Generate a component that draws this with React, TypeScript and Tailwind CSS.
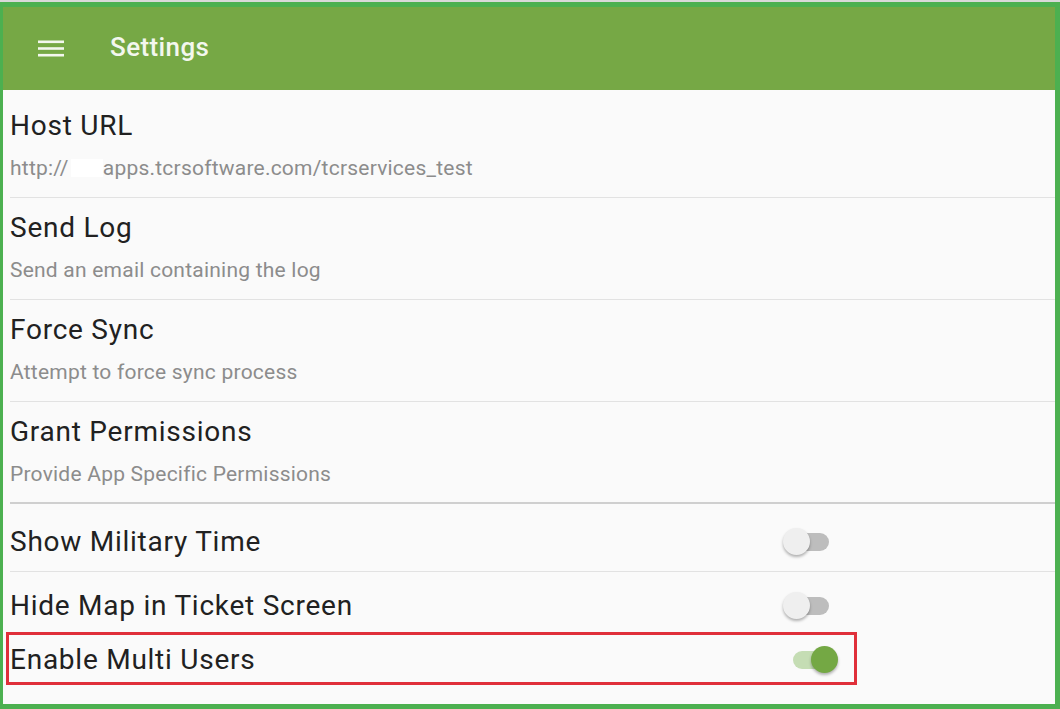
import React from 'react';

const font = { fontFamily: 'Roboto, "Noto Sans", sans-serif' };

type Pref = { title: string; summary: string };

const prefs: Pref[] = [
  { title: 'Host URL', summary: 'http://' },
  { title: 'Send Log', summary: 'Send an email containing the log' },
  { title: 'Force Sync', summary: 'Attempt to force sync process' },
  { title: 'Grant Permissions', summary: 'Provide App Specific Permissions' },
];

const Toggle: React.FC<{ on?: boolean }> = ({ on }) => {
  if (on) {
    return (
      <div className="relative w-[45px] h-[28px] flex items-center">
        <div className="w-[38px] h-[18px] rounded-full bg-[#c5ddb4]" />
        <div className="absolute right-0 top-0 w-[27px] h-[27px] rounded-full bg-[#74a844] shadow-[0_2px_3px_rgba(0,0,0,0.3)]" />
      </div>
    );
  }
  return (
    <div className="relative w-[46px] h-[28px] flex items-center justify-end">
      <div className="w-[38px] h-[18px] rounded-full bg-[#bdbdbd]" />
      <div className="absolute left-0 top-0 w-[27px] h-[27px] rounded-full bg-[#efefef] shadow-[0_2px_3px_rgba(0,0,0,0.3)]" />
    </div>
  );
};

const App: React.FC = () => {
  return (
    <div style={font} className="w-[1060px] h-[709px] bg-[#4cb050] border-t-2 border-[#d9d9d9] pt-[5px] pl-[3px] pr-[5px] pb-[5px] flex flex-col overflow-hidden">
      {/* Toolbar */}
      <header className="h-[83px] bg-[#76a845] flex items-center shrink-0">
        <div className="w-[107px] pl-[35px] flex">
          <svg width="26" height="18" viewBox="0 0 26 18">
            <rect x="0" y="0.5" width="26" height="2.6" fill="#f3f7ee" />
            <rect x="0" y="7.2" width="26" height="2.6" fill="#f3f7ee" />
            <rect x="0" y="13.9" width="26" height="2.6" fill="#f3f7ee" />
          </svg>
        </div>
        <h1 className="text-[26px] font-medium text-[#f3f7ee] tracking-[0.4px] -mt-[2px]">Settings</h1>
      </header>

      {/* Preferences */}
      <main className="flex-1 bg-[#fafafa] flex flex-col">
        {prefs.map((p, i) => (
          <div
            key={p.title}
            className={`flex flex-col pl-[7px] ${i === 0 ? 'pt-[20px] h-[108px]' : 'pt-[14px] h-[102px]'}`}
          >
            <div className="text-[28px] leading-[32px] tracking-[0.75px] text-[#212121]">{p.title}</div>
            <div className="mt-[14px] text-[21px] leading-[24px] tracking-[0.22px] text-[#8c8c8c] flex items-center">
              {p.summary}
              {i === 0 && (
                <>
                  <span className="inline-block w-[32px] h-[18px] bg-white ml-[2px]" />
                  <span>apps.tcrsoftware.com/tcrservices_test</span>
                </>
              )}
            </div>
            <div className={`mt-auto ${i === 3 ? 'h-[2px] bg-[#cfcfcf]' : 'h-px bg-[#e2e2e2]'}`} />
          </div>
        ))}

        <div className="h-[68px] flex flex-col pl-[7px]">
          <div className="flex-1 flex items-center pt-[8px]">
            <span className="text-[28px] tracking-[0.75px] text-[#212121] w-[773px]">Show Military Time</span>
            <Toggle />
          </div>
          <div className="h-px bg-[#e2e2e2]" />
        </div>

        <div className="h-[60px] flex items-center pl-[7px] pt-[8px]">
          <span className="text-[28px] tracking-[0.75px] text-[#212121] w-[773px]">Hide Map in Ticket Screen</span>
          <Toggle />
        </div>

        <div className="pl-[3px]">
          <div className="w-[851px] h-[53px] border-[3px] border-[#e0303a] flex items-center pl-[1px] pt-[2px]">
            <span className="text-[28px] tracking-[0.75px] text-[#212121] w-[783px]">Enable Multi Users</span>
            <Toggle on />
          </div>
        </div>
      </main>
    </div>
  );
};

export default App;
